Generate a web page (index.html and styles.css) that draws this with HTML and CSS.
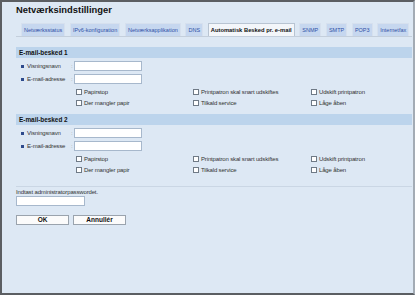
FILE: index.html
```html
<!DOCTYPE html>
<html lang="da">
<head>
    <meta charset="UTF-8">
    <title>Netværksindstillinger</title>
    <link rel="stylesheet" href="styles.css">
</head>
<body>
    <div class="frame">
        <h1>Netværksindstillinger</h1>

        <div class="tabs">
            <span class="tab">Netværksstatus</span>
            <span class="tab">IPv6-konfiguration</span>
            <span class="tab">Netværksapplikation</span>
            <span class="tab">DNS</span>
            <span class="tab active">Automatisk Besked pr. e-mail</span>
            <span class="tab">SNMP</span>
            <span class="tab">SMTP</span>
            <span class="tab">POP3</span>
            <span class="tab">Internetfax</span>
        </div>

        <div class="section">
            <div class="section-head">E-mail-besked 1</div>
            <div class="field">
                <span class="bullet"></span><span class="label">Visningsnavn</span><span class="colon">:</span>
                <span class="input"></span>
            </div>
            <div class="field">
                <span class="bullet"></span><span class="label">E-mail-adresse</span><span class="colon">:</span>
                <span class="input"></span>
            </div>
            <div class="checks">
                <label><span class="box"></span>Papirstop</label>
                <label><span class="box"></span>Printpatron skal snart udskiftes</label>
                <label><span class="box"></span>Udskift printpatron</label>
                <label><span class="box"></span>Der mangler papir</label>
                <label><span class="box"></span>Tilkald service</label>
                <label><span class="box"></span>Låge åben</label>
            </div>
        </div>

        <div class="section">
            <div class="section-head">E-mail-besked 2</div>
            <div class="field">
                <span class="bullet"></span><span class="label">Visningsnavn</span><span class="colon">:</span>
                <span class="input"></span>
            </div>
            <div class="field">
                <span class="bullet"></span><span class="label">E-mail-adresse</span><span class="colon">:</span>
                <span class="input"></span>
            </div>
            <div class="checks">
                <label><span class="box"></span>Papirstop</label>
                <label><span class="box"></span>Printpatron skal snart udskiftes</label>
                <label><span class="box"></span>Udskift printpatron</label>
                <label><span class="box"></span>Der mangler papir</label>
                <label><span class="box"></span>Tilkald service</label>
                <label><span class="box"></span>Låge åben</label>
            </div>
        </div>

        <div class="admin">
            <div class="admin-label">Indtast administratorpasswordet.</div>
            <span class="input pw"></span>
            <div class="buttons">
                <button class="btn">OK</button>
                <button class="btn">Annullér</button>
            </div>
        </div>
    </div>
</body>
</html>
```

FILE: styles.css
```css
html, body {
    margin: 0;
    padding: 0;
}
body {
    font-family: "Liberation Sans", Arial, sans-serif;
    font-size: 6px;
    letter-spacing: -0.15px;
    color: #333;
    background: #dde8f4;
}
.frame {
    box-sizing: border-box;
    height: 295px;
    border-top: 2px solid #5b5e62;
    border-left: 2px solid #5b5e62;
    border-bottom: 2px solid #5b5e62;
    border-right: 2px solid #a3abb4;
    padding: 0 1px 0 14px;
}
h1 {
    margin: 0;
    padding-top: 2px;
    font-size: 9.4px;
    line-height: 11px;
    font-weight: bold;
    letter-spacing: 0;
    color: #111;
}
.tabs {
    display: flex;
    gap: 4.7px;
    margin-top: 8px;
    padding-left: 5px;
    height: 13px;
    border-bottom: 1px solid #c4cfdc;
}
.tab {
    height: 12px;
    line-height: 12px;
    padding: 0 2px;
    font-size: 5.5px;
    letter-spacing: 0;
    background: #c6d7ef;
    color: #2f4fa6;
    border: 1px solid #d6e0ee;
    border-bottom: none;
    white-space: nowrap;
}
.tab.active {
    background: #f3f6fa;
    color: #111;
    font-weight: bold;
    font-size: 5.8px;
    border-color: #b8c4d2;
}
.section {
    margin-top: 10px;
}
.section + .section {
    margin-top: 7px;
}
.section-head {
    height: 11px;
    line-height: 11px;
    padding-left: 3px;
    font-size: 6.4px;
    font-weight: bold;
    letter-spacing: 0;
    color: #111;
    background: #bcd4ec;
}
.field {
    display: flex;
    align-items: center;
    height: 10px;
    margin-top: 3px;
    padding-left: 5px;
}
.bullet {
    width: 3px;
    height: 3px;
    margin-right: 3px;
    background: #2d4a8c;
}
.label {
    width: 44px;
}
.colon {
    width: 3px;
    color: #999;
}
.input {
    display: block;
    box-sizing: border-box;
    width: 68px;
    height: 10px;
    background: #fff;
    border: 1px solid #a7b8cc;
}
.checks {
    display: grid;
    grid-template-columns: 117px 118px auto;
    row-gap: 3px;
    padding: 4px 0 0 60px;
}
.checks label {
    display: flex;
    align-items: center;
    height: 8px;
    white-space: nowrap;
}
.box {
    box-sizing: border-box;
    width: 6px;
    height: 6px;
    margin-right: 2px;
    background: #fff;
    border: 1px solid #6f7a86;
}
.admin {
    margin-top: 12px;
    padding-top: 1px;
    border-top: 1px solid #cad6e4;
}
.admin-label {
    height: 8px;
    line-height: 8px;
}
.pw {
    width: 69px;
}
.buttons {
    display: flex;
    gap: 4px;
    margin-top: 9px;
}
.btn {
    box-sizing: border-box;
    width: 53px;
    height: 10px;
    padding: 0;
    font-family: inherit;
    font-size: 6.5px;
    font-weight: bold;
    line-height: 8px;
    letter-spacing: 0;
    color: #111;
    background: #fbfbfb;
    border: 1px solid #9aa3ad;
}
```
